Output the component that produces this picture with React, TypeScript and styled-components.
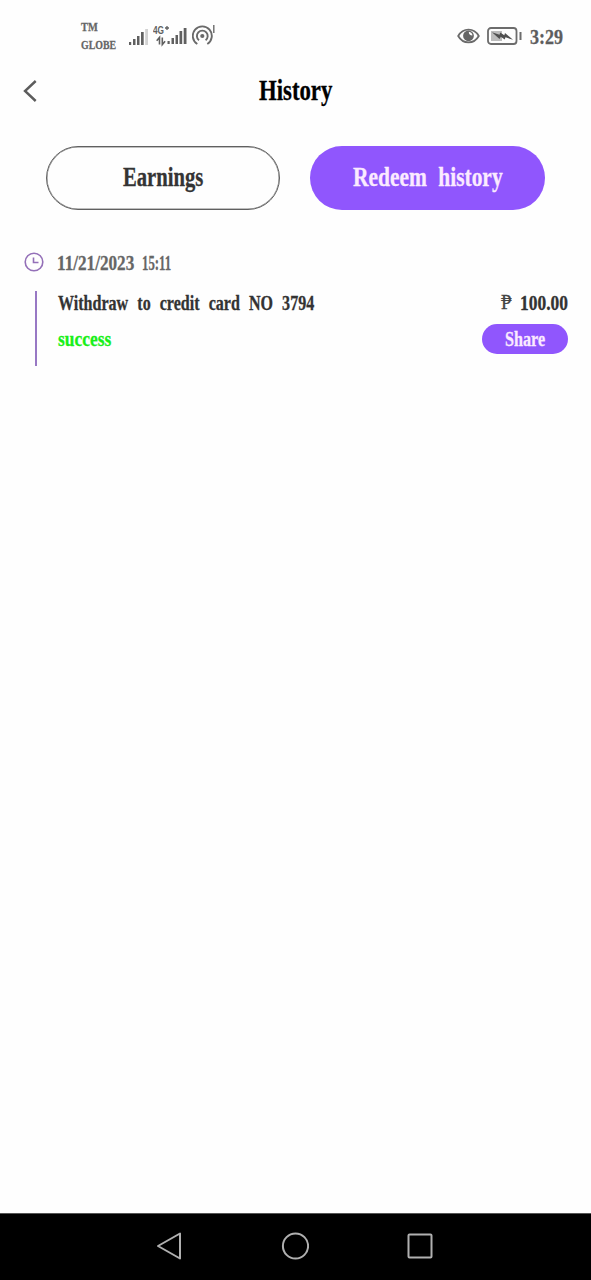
import React from "react";
import styled, { createGlobalStyle } from "styled-components";

const Global = createGlobalStyle`
  * { box-sizing: border-box; }
  body { margin: 0; background: #fefefe; }
`;

const Screen = styled.div`
  width: 591px;
  height: 1280px;
  display: flex;
  flex-direction: column;
  background: #fefefe;
  font-family: "Liberation Serif", "DejaVu Serif", serif;
  font-weight: 700;
`;

/* Condensed display lettering: $w is the drawn width, $scale squeezes the glyphs. */
const Text = styled.span<{ $size: number; $w: number; $scale: number; $color: string; $gap?: number; $weight?: number }>`
  display: block;
  flex: none;
  width: ${(p) => p.$w}px;
  font-size: ${(p) => p.$size}px;
  line-height: ${(p) => Math.round(p.$size * 1.15)}px;
  font-weight: ${(p) => p.$weight ?? 700};
  word-spacing: ${(p) => p.$gap ?? 0}px;
  color: ${(p) => p.$color};
  white-space: nowrap;
  transform: scaleX(${(p) => p.$scale});
  transform-origin: left center;
  -webkit-text-stroke: 0.3px currentColor;
`;

const StatusBar = styled.header`
  height: 64px;
  padding: 8px 28px 0 81px;
  display: flex;
  justify-content: space-between;
`;
const StatusGroup = styled.div`
  display: flex;
  height: 56px;
  align-items: center;
`;
const Carrier = styled.div`
  display: flex;
  flex-direction: column;
  gap: 3px;
  width: 47px;
`;
const StatusIcon = styled.svg<{ $right: number }>`
  display: block;
  flex: none;
  margin-right: ${(p) => p.$right}px;
`;

const TitleBar = styled.div`
  height: 53px;
  display: grid;
  grid-template-columns: 259px 1fr;
  align-items: center;
`;
const BackButton = styled.button`
  border: 0;
  padding: 0 0 0 23px;
  background: none;
  display: flex;
`;

const Tabs = styled.nav`
  display: grid;
  grid-template-columns: 234px 235px;
  gap: 30px;
  padding: 29px 46px 0;
`;
const Tab = styled.button<{ $active?: boolean }>`
  height: 64px;
  padding: 0 0 1px;
  font-family: inherit;
  text-align: left;
  display: flex;
  align-items: center;
  justify-content: center;
  border-radius: 32px;
  border: ${(p) => (p.$active ? "0" : "1px solid #606060")};
  box-shadow: ${(p) => (p.$active ? "none" : "inset 0 0 0 0.5px #808080")};
  background: ${(p) => (p.$active ? "#9056fd" : "#fefefe")};
`;

const Entry = styled.section`
  padding: 39px 23px 0 24px;
`;
const DateRow = styled.div`
  height: 26px;
  display: flex;
  align-items: center;
  gap: 7px;
`;
const DateText = styled.div`
  display: flex;
  gap: 7px;
  padding-left: 6px;
`;
const Detail = styled.div`
  height: 75px;
  margin: 16px 0 0 11px;
  padding-left: 21px;
  border-left: 2px solid #9878c4;
  display: flex;
  flex-direction: column;
`;
const DetailRow = styled.div<{ $h: number }>`
  height: ${(p) => p.$h}px;
  display: flex;
  align-items: center;
  justify-content: space-between;
`;
const Amount = styled.div`
  display: flex;
  align-items: center;
  gap: 6px;
`;
const ShareButton = styled.button`
  width: 86px;
  height: 30px;
  padding: 0;
  border: 0;
  border-radius: 15px;
  background: #9056fd;
  font-family: inherit;
  text-align: left;
  display: flex;
  align-items: center;
  justify-content: center;
`;

const NavBar = styled.footer`
  margin-top: auto;
  height: 67px;
  background: #000;
  border-top: 1px solid #555;
  display: flex;
  align-items: center;
  justify-content: space-between;
  padding: 0 157px 2px 155px;
`;

const Signal = ({ last }: { last: string }) => (
  <g fill="#606060">
    <rect x="0" y="13" width="2.2" height="3" />
    <rect x="4" y="10" width="2.5" height="6" />
    <rect x="8" y="7" width="2.5" height="9" />
    <rect x="12" y="3" width="2.7" height="13" />
    <rect x="16.2" y="0" width="2.8" height="16" fill={last} />
  </g>
);

export default function App() {
  return (
    <Screen>
      <Global />
      <StatusBar>
        <StatusGroup>
          <Carrier>
            <Text $size={13} $w={17} $scale={0.8} $color="#666">TM</Text>
            <Text $size={13.5} $w={34} $scale={0.73} $color="#666">GLOBE</Text>
          </Carrier>
          <StatusIcon $right={5} width="20" height="20" viewBox="0 0 20 20">
            <g transform="translate(1 3)"><Signal last="#d2d2d2" /></g>
          </StatusIcon>
          <StatusIcon $right={5} width="34" height="22" viewBox="0 0 34 22">
            <text x="0" y="8.5" fontFamily="Liberation Sans" fontWeight="700" fontSize="10.5" textLength="11" lengthAdjust="spacingAndGlyphs" fill="#606060">4G</text>
            <path d="M12 3h4M14 1v4" stroke="#606060" strokeWidth="1.3" />
            <path d="M6.5 19.5v-7l-2.8 3.2M9.3 12.5v7l2.8-3.2" stroke="#606060" strokeWidth="1.6" fill="none" />
            <g transform="translate(14.5 3)"><Signal last="#606060" /></g>
          </StatusIcon>
          <StatusIcon $right={0} width="24" height="24" viewBox="0 0 24 24" fill="none" stroke="#6a6a6a" strokeWidth="1.9">
            <path d="M5.3 20A9.5 9.5 0 1 1 15.3 20" />
            <path d="M7 16.3A5.4 5.4 0 1 1 13.6 16.3" />
            <circle cx="10.3" cy="12" r="2.1" fill="#6a6a6a" stroke="none" />
            <path d="M21.8 1v8" strokeWidth="1.4" />
          </StatusIcon>
        </StatusGroup>
        <StatusGroup>
          <StatusIcon $right={7} width="23" height="18" viewBox="0 0 23 18" fill="none" stroke="#6a6a6a">
            <path d="M1.2 9C6 .5 17 .5 21.8 9C17 17.5 6 17.5 1.2 9Z" strokeWidth="1.8" />
            <circle cx="11.5" cy="8.8" r="5.4" fill="#666" stroke="none" />
            <path d="M11.8 4.8Q15.2 5.3 15.4 8.6Q11.8 8.6 11.8 4.8Z" fill="#fefefe" stroke="none" />
          </StatusIcon>
          <StatusIcon $right={8} width="35" height="20" viewBox="0 0 35 20" fill="none">
            <rect x="1" y="2" width="28.5" height="16" rx="3" stroke="#6c6c6c" strokeWidth="1.8" />
            <rect x="4" y="5" width="11" height="10" fill="#bcbcbc" />
            <path d="M5 6.2L12.5 8.8L13.2 6.5L17.3 9.2L18 7L26 13.8L18.5 11.3L17.7 13.5L13.8 10.8L12.5 13Z" fill="#505050" />
            <path d="M33.5 6v8" stroke="#6c6c6c" strokeWidth="2" />
          </StatusIcon>
          <Text $size={22} $w={33} $scale={0.82} $color="#5d5d5d">3:29</Text>
        </StatusGroup>
      </StatusBar>

      <TitleBar>
        <BackButton aria-label="Back">
          <svg width="15" height="24" viewBox="0 0 15 24" fill="none">
            <path d="M12.7 2L2 12l10.7 10" stroke="#5c5c5c" strokeWidth="2.4" />
          </svg>
        </BackButton>
        <Text $size={29} $w={73} $scale={0.785} $color="#000">History</Text>
      </TitleBar>

      <Tabs>
        <Tab><Text $size={27} $w={81} $scale={0.765} $color="#343434">Earnings</Text></Tab>
        <Tab $active><Text $size={27} $w={150} $scale={0.795} $gap={7.5} $color="#fbeaff">Redeem history</Text></Tab>
      </Tabs>

      <Entry>
        <DateRow>
          <svg width="20" height="20" viewBox="0 0 20 20" fill="none" stroke="#9470b8" strokeWidth="1.6">
            <circle cx="10" cy="10" r="8.8" />
            <path d="M9.5 5.5v5h5" />
          </svg>
          <DateText>
            <Text $size={22} $w={78} $scale={0.78} $color="#666">11/21/2023</Text>
            <Text $size={22} $w={29} $scale={0.58} $color="#666">15:11</Text>
          </DateText>
        </DateRow>
        <Detail>
          <DetailRow $h={23}>
            <Text $size={21} $w={255} $scale={0.765} $gap={6.6} $color="#333">Withdraw to credit card NO 3794</Text>
            <Amount>
              <Text $size={20} $w={13} $scale={0.95} $color="#444" $weight={400}>₱</Text>
              <Text $size={21} $w={48} $scale={0.83} $color="#333">100.00</Text>
            </Amount>
          </DetailRow>
          <DetailRow $h={50}>
            <Text $size={21} $w={53} $scale={0.83} $color="#18ef18">success</Text>
            <ShareButton><Text $size={21} $w={41} $scale={0.77} $color="#fbeaff">Share</Text></ShareButton>
          </DetailRow>
        </Detail>
      </Entry>

      <NavBar>
        <svg width="28" height="30" viewBox="0 0 28 30" fill="none" stroke="#b0b0b0" strokeWidth="2" strokeLinejoin="round">
          <path d="M25 2.5v25L3 15Z" />
        </svg>
        <svg width="28" height="28" viewBox="0 0 28 28" fill="none" stroke="#b0b0b0" strokeWidth="2">
          <circle cx="14.5" cy="14" r="12.6" />
        </svg>
        <svg width="28" height="28" viewBox="0 0 28 28" fill="none" stroke="#b0b0b0" strokeWidth="2">
          <rect x="2.5" y="2.5" width="23" height="23" rx="1" />
        </svg>
      </NavBar>
    </Screen>
  );
}
